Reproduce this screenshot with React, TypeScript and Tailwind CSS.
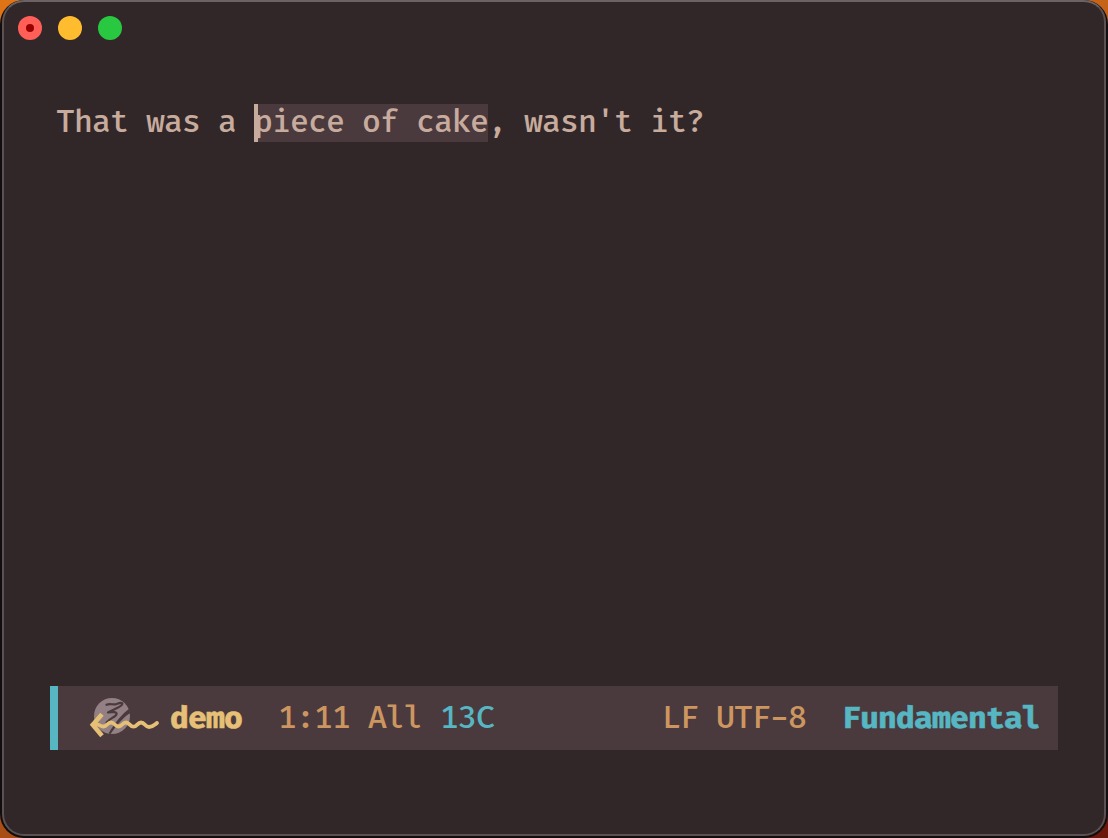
function TrafficLights() {
  return (
    <div className="flex h-[38px] gap-4 pl-3.5 pt-3.5">
      <span className="flex size-6 items-center justify-center rounded-full bg-[#ff5f57]">
        <span className="size-2 rounded-full bg-[#990000]" />
      </span>
      <span className="size-6 rounded-full bg-[#febc2e]" />
      <span className="size-6 rounded-full bg-[#28c840]" />
    </div>
  );
}

function EvilIcon() {
  return (
    <svg width="76" height="44" viewBox="0 0 76 44" fill="none" className="shrink-0">
      <circle cx="24" cy="20" r="18" fill="#928084" />
      <path
        d="M18.5 8.8 C22 7.2 24.5 9 28 8.2 C31 7.2 34 5.8 34.4 7.8 C34 10.5 27 12.8 20 16.4 C24.5 15.8 28.6 16 28.6 17.8 C28.4 20.4 22.5 22 18.5 26.5"
        stroke="#4a393d"
        strokeWidth="2.2"
        strokeLinecap="round"
        strokeLinejoin="round"
      />
      <path d="M41 13 C34 18 27.5 26 20.5 37.5 L22.5 38 C29 29 34 22.5 42.2 17 Z" fill="#4a393d" />
      <path d="M14 18.2 L4.8 28.7 L14 39.8" stroke="#e5c076" strokeWidth="4.6" />
      <path
        d="M6 28.7 C10 27 12 30.5 15.5 30.5 C19 30.5 19.5 26.5 23 26.5 C26.5 26.5 27 30.5 30.5 30.5 C34 30.5 34.5 26.5 38 26.5 C41.5 26.5 42 30.7 45.5 30.7 C49 30.7 49.5 26.5 53 26.5 C57 26.5 57 31 61 31 C65 31 66.5 28.5 69 27"
        stroke="#e5c076"
        strokeWidth="3.8"
        strokeLinecap="round"
      />
    </svg>
  );
}

export default function App() {
  return (
    <div className="h-[838px] w-[1108px] overflow-hidden bg-[linear-gradient(150deg,#df7417_0%,#d97018_35%,#954014_65%,#6c170b_100%)]">
      <div className="h-[838px] w-[1108px] rounded-[24px] bg-[#120d0e] px-[2px] pb-[2px]">
        <div className="flex h-[836px] w-[1104px] flex-col rounded-[22px] border-2 border-[#5b5052] border-t-[#6b6264] bg-[#312729] font-['Fira_Code','DejaVu_Sans_Mono',monospace] text-[30.75px] font-medium tracking-[-0.923px]">
          <TrafficLights />
          <main className="flex h-[646px] flex-col pl-[52px] pt-16">
            <p className="flex h-[38px] whitespace-pre leading-[37px] text-[#c7ab9d]">
              <span>That was a </span>
              <span className="relative h-[38px] bg-[#4a393d]">
                piece of cake
                <span className="absolute left-0 top-0 h-[38px] w-1 bg-[#c7ab9d]" />
              </span>
              <span>, wasn't it?</span>
            </p>
          </main>
          <footer className="ml-[46px] flex h-16 w-[1008px] items-center border-l-8 border-[#56b6c2] bg-[#4a393d] pl-[30px] pr-[18px] leading-[36px]">
            <div className="flex w-[82px]">
              <EvilIcon />
            </div>
            <div className="flex flex-1 whitespace-pre pt-0.5">
              <span className="w-[108px] font-bold text-[#e5c076] [-webkit-text-stroke:0.5px_#e5c076]">demo</span>
              <span className="w-[90px] text-[#cd9660]">1:11</span>
              <span className="w-[72px] text-[#cd9660]">All</span>
              <span className="text-[#56b6c2]">13C</span>
              <span className="ml-auto w-[180px] text-[#cd9660]">LF UTF-8</span>
              <span className="font-bold text-[#56b6c2] [-webkit-text-stroke:0.5px_#56b6c2]">Fundamental</span>
            </div>
          </footer>
        </div>
      </div>
    </div>
  );
}
